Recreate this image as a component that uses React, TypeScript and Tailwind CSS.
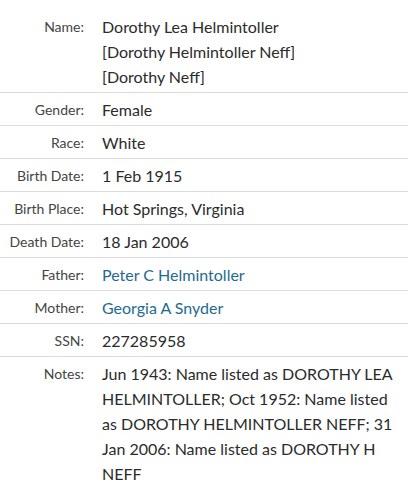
import React from "react";

type Row = { label: string; value: React.ReactNode; link?: boolean };

const rows: Row[] = [
  {
    label: "Name:",
    value: (
      <>
        <div>Dorothy Lea Helmintoller</div>
        <div>[Dorothy Helmintoller Neff]</div>
        <div>[Dorothy Neff]</div>
      </>
    ),
  },
  { label: "Gender:", value: "Female" },
  { label: "Race:", value: "White" },
  { label: "Birth Date:", value: "1 Feb 1915" },
  { label: "Birth Place:", value: "Hot Springs, Virginia" },
  { label: "Death Date:", value: "18 Jan 2006" },
  { label: "Father:", value: "Peter C Helmintoller", link: true },
  { label: "Mother:", value: "Georgia A Snyder", link: true },
  { label: "SSN:", value: "227285958" },
  {
    label: "Notes:",
    value:
      "Jun 1943: Name listed as DOROTHY LEA HELMINTOLLER; Oct 1952: Name listed as DOROTHY HELMINTOLLER NEFF; 31 Jan 2006: Name listed as DOROTHY H NEFF",
  },
];

export default function App() {
  return (
    <div className="w-[408px] h-[498px] bg-white pt-[10px] font-['Lato',sans-serif]">
      {rows.map((row, i) => (
        <div
          key={row.label}
          className={`flex gap-[18px] pt-1 pb-[3px] ${i < rows.length - 1 ? "border-b border-[#dcdcdc]" : ""}`}
        >
          <div className="w-[84px] shrink-0 text-right text-[14px] leading-[25px] text-[#444]">
            {row.label}
          </div>
          <div
            className={`w-[292px] text-[16px] leading-[25px] ${
              row.link ? "text-[#1f6a8e]" : "text-[#2b2b2b]"
            }`}
          >
            {row.value}
          </div>
        </div>
      ))}
    </div>
  );
}
